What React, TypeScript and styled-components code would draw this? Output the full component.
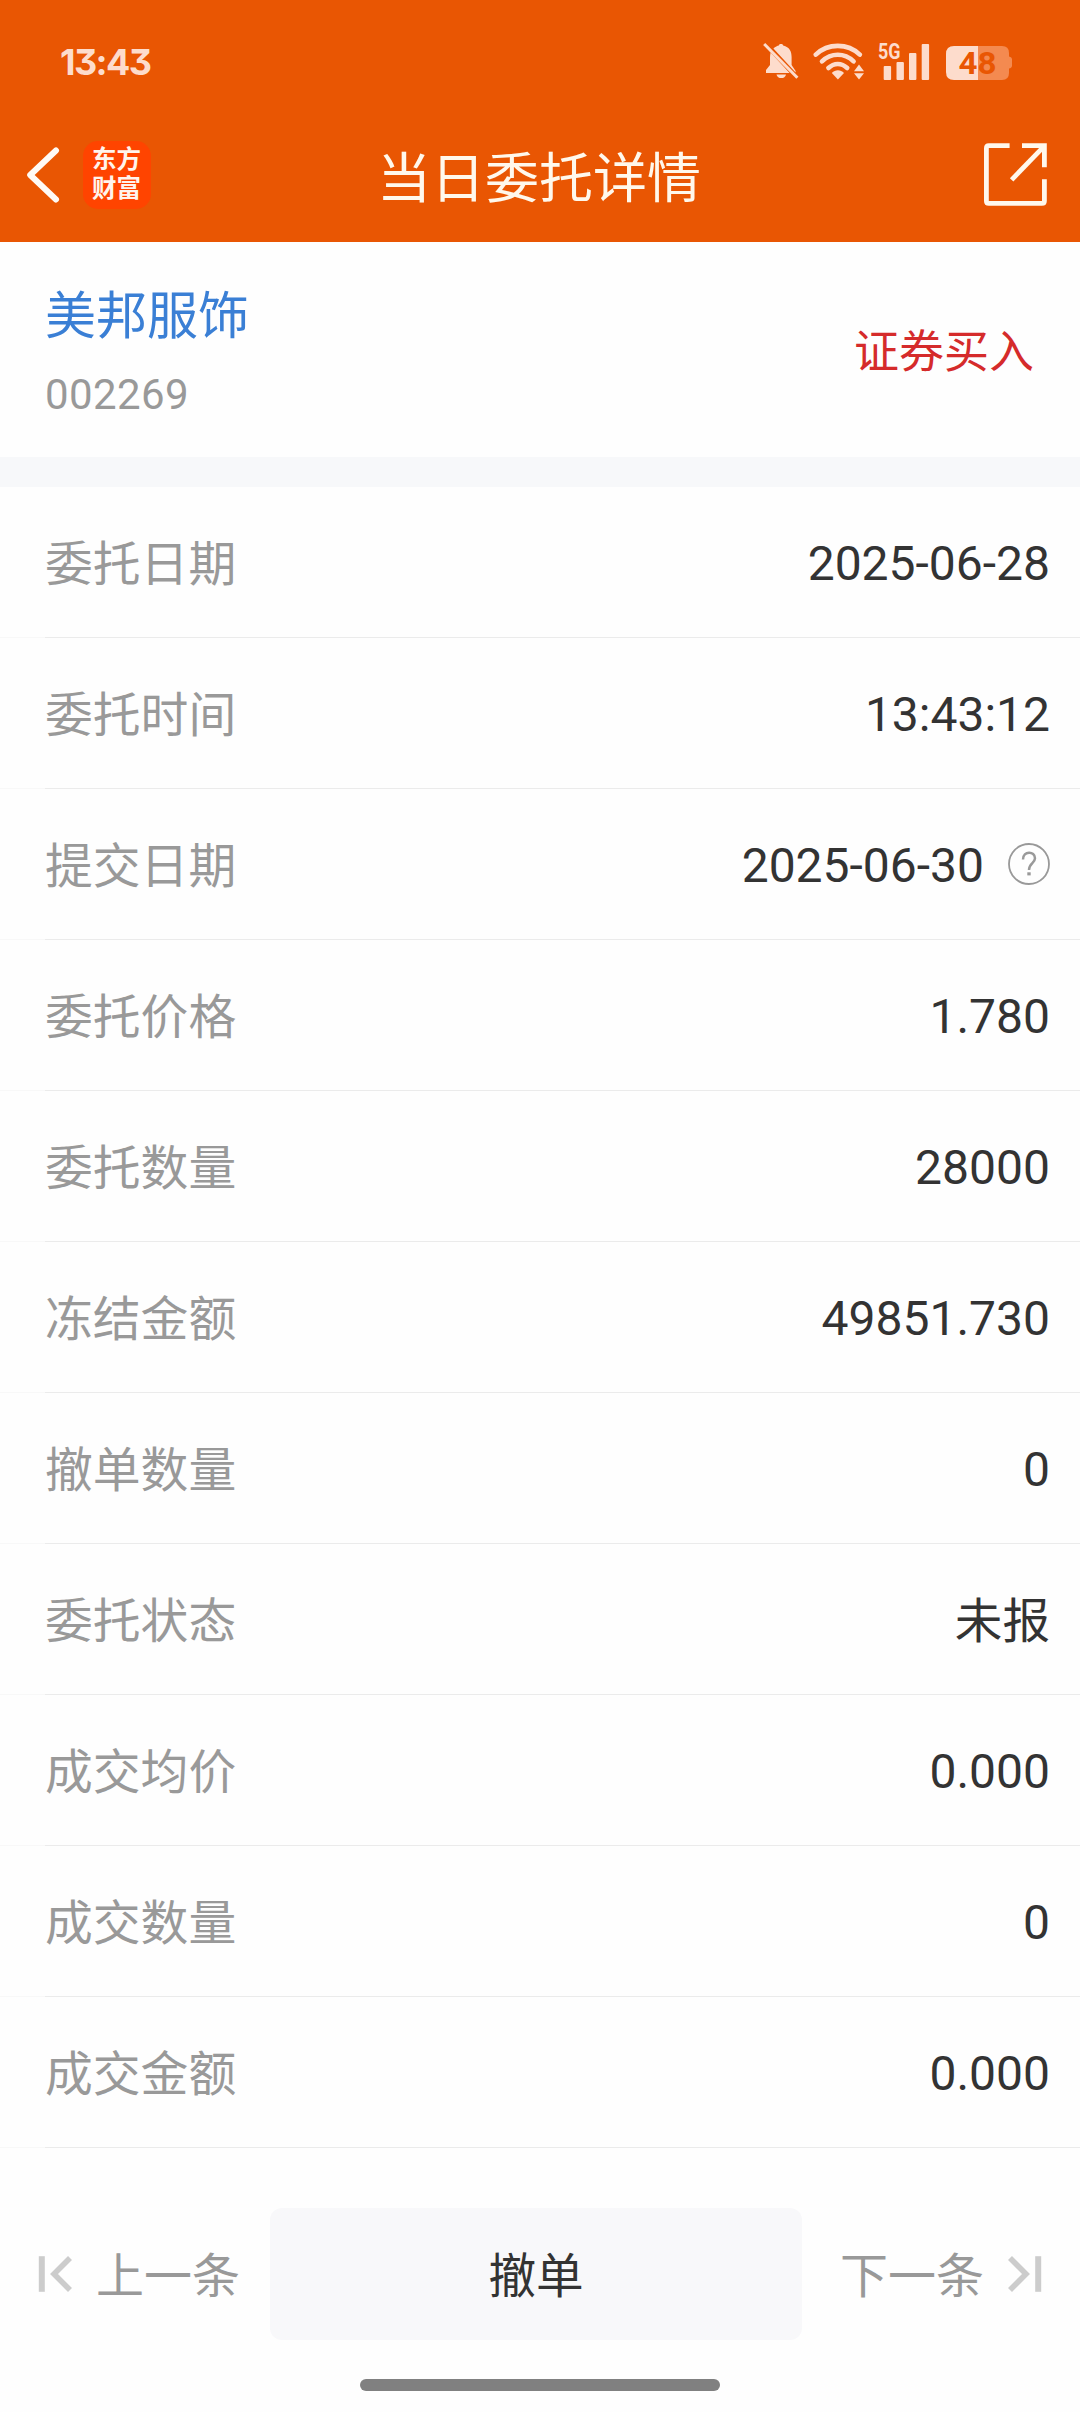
import React from 'react';
import styled, { createGlobalStyle } from 'styled-components';

const GlobalStyle = createGlobalStyle`
  *, *::before, *::after { box-sizing: border-box; }
  html, body { margin: 0; padding: 0; background: #fefefe; }
  body { font-family: Roboto, "Noto Sans CJK SC", sans-serif; color: #333333; }
  button { font: inherit; border: 0; padding: 0; margin: 0; background: none; }
  svg { display: block; flex: none; }
`;

const TINT = '#fddccc';
const ORANGE = '#e95603';

const Screen = styled.main`
  width: 1080px;
  height: 2412px;
  display: flex;
  flex-direction: column;
  background: #fefefe;
  overflow: hidden;
`;

const Header = styled.header`
  height: 242px;
  background: ${ORANGE};
  display: flex;
  flex-direction: column;
  flex: none;
`;

const StatusBar = styled.div`
  height: 107px;
  padding: 16px 67px 0 60px;
  display: flex;
  align-items: center;
  justify-content: space-between;
`;

const Clock = styled.span`
  font-family: Inter, sans-serif;
  font-feature-settings: 'cv09';
  font-weight: 700;
  font-size: 36px;
  letter-spacing: -1.6px;
  line-height: 40px;
  color: ${TINT};
`;

const StatusIcons = styled.div`
  display: flex;
  align-items: center;
  gap: 13px;
  padding-bottom: 2px;

  & > :first-child { margin-right: 1px; }
  & > :last-child { margin-left: 3px; }
`;

const NavBar = styled.div`
  height: 135px;
  padding: 0 32px 0 26px;
  display: grid;
  grid-template-columns: 1fr auto 1fr;
  align-items: center;
`;

const NavLeft = styled.div`
  display: flex;
  align-items: center;
  gap: 23px;
`;

const NavRight = styled.div`
  display: flex;
  justify-content: flex-end;
`;

const Logo = styled.div`
  width: 68px;
  height: 68px;
  border-radius: 15px;
  background: #ff4400;
  color: #fff4ec;
  display: flex;
  flex-direction: column;
  align-items: center;
  justify-content: center;
  font-weight: 700;
  font-size: 24.5px;
  line-height: 29px;
  padding: 0 1px 2px 0;
`;

const Title = styled.h1`
  margin: 0;
  padding: 10px 0 0 4px;
  font-size: 54px;
  line-height: 80px;
  font-weight: 400;
  color: #fff8ec;
`;

const Stock = styled.section`
  height: 215px;
  flex: none;
  padding: 6px 46px 0 45px;
  display: flex;
  align-items: center;
  justify-content: space-between;
`;

const StockInfo = styled.div`
  display: flex;
  flex-direction: column;
`;

const StockName = styled.div`
  font-size: 51px;
  line-height: 76px;
  color: #3a7fd5;
`;

const StockCode = styled.div`
  margin-top: 8px;
  font-size: 42px;
  line-height: 64px;
  letter-spacing: 0.4px;
  color: #999999;
`;

const Side = styled.div`
  font-size: 45px;
  line-height: 66px;
  color: #d52b2b;
`;

const Band = styled.div`
  height: 30px;
  flex: none;
  background: #f7f8fa;
`;

const Row = styled.div`
  height: 151px;
  flex: none;
  padding: 0 30px 1px 45px;
  display: flex;
  align-items: center;
  justify-content: space-between;
  background: linear-gradient(90deg, #f8f8f8 45px, #ebebeb 45px) bottom / 100% 1px no-repeat;
`;

const Label = styled.span`
  padding-top: 6px;
  font-size: 47.8px;
  line-height: 72px;
  color: #999999;
`;

const Value = styled.span<{ $cjk?: boolean }>`
  display: flex;
  align-items: center;
  gap: 24px;
  font-size: ${(p) => (p.$cjk ? '47.6px' : '48px')};
  line-height: 72px;
  padding-top: ${(p) => (p.$cjk ? '6px' : '0')};
  color: #333333;
`;

const Figure = styled.span`
  padding-top: 3px;
`;

const Footer = styled.footer`
  height: 132px;
  margin-top: 60px;
  flex: none;
  display: grid;
  grid-template-columns: 270px 532px 278px;
`;

const Pager = styled.button<{ $end?: boolean }>`
  display: flex;
  align-items: center;
  gap: 23px;
  justify-content: ${(p) => (p.$end ? 'flex-end' : 'flex-start')};
  padding: ${(p) => (p.$end ? '0 38px 0 0' : '0 0 0 38px')};
  font-size: 48px;
  line-height: 72px;
  color: #999999;
`;

const PagerText = styled.span`
  padding-top: 6px;
`;

const CancelButton = styled.button`
  padding-top: 6px;
  border-radius: 12px;
  background: #f8f8fa;
  color: #333333;
  font-size: 47.6px;
  line-height: 72px;
`;

const HomeBar = styled.div`
  width: 360px;
  height: 12px;
  margin: 39px auto 0;
  border-radius: 6px;
  background: #808080;
`;

const MutedBell = () => (
  <svg width="36" height="38" viewBox="0 0 36 38" fill={TINT}>
    <path d="M10.4 6.6C12.4 4.4 14.4 3.8 15.8 3.4C16.4 1.6 19.6 1.6 20.2 3.4C26.5 5 28.6 9 28.6 15V23L32.6 29V30.6Z" />
    <path d="M7.6 10.5L26.6 31H3V28L7 23V16C7 14 7.2 12.2 7.6 10.5Z" />
    <path d="M13.5 32.4H23C22.4 37.2 14.2 37.2 13.5 32.4Z" />
    <path d="M1.2 2L34.4 35.8" stroke={TINT} strokeWidth="3" />
  </svg>
);

const Wifi = () => (
  <svg width="52" height="38" viewBox="0 0 52 38">
    <g fill="none" stroke={TINT} strokeWidth="4.6" strokeLinecap="round">
      <path d="M2.8 12.6C15 1 34.6 1 46.8 12.6" />
      <path d="M9 19.4C18.2 10.6 31.4 10.6 40.6 19.4" />
      <path d="M15.4 26C21 20.6 28.6 20.6 34.2 26" />
    </g>
    <path d="M18.8 31C22.2 27.4 27.6 27.4 31 31L24.9 37.4Z" fill={TINT} />
    <path d="M46 22.4L51 29.2H41Z M46 37.4L51 31.2H41Z" fill={TINT} />
  </svg>
);

const Signal = () => (
  <svg width="52" height="54" viewBox="0 -8 52 54" fill={TINT}>
    <text x="0" y="16.6" fontFamily="Roboto, sans-serif" fontWeight="700" fontSize="22" textLength="22.5" lengthAdjust="spacingAndGlyphs">
      5G
    </text>
    <rect x="5.7" y="24" width="7.4" height="14" rx="1" />
    <rect x="18.5" y="20" width="7.4" height="18" rx="1" />
    <rect x="31" y="11" width="7.4" height="27" rx="1" />
    <rect x="43.7" y="2" width="7.4" height="36" rx="1" />
  </svg>
);

const Battery = () => (
  <svg width="67" height="38" viewBox="0 0 67 38">
    <path d="M32 4H56Q63 4 63 11V14.5Q66 15 66 17.5V23.5Q66 26 63 26.5V31Q63 38 56 38H32Z" fill="#f48a50" />
    <path d="M32 4H8Q0 4 0 12V30Q0 38 8 38H32Z" fill={TINT} />
    <text x="12.4" y="32.4" fontFamily="Roboto, sans-serif" fontWeight="700" fontSize="31.5" textLength="38" lengthAdjust="spacingAndGlyphs" fill={ORANGE}>
      48
    </text>
  </svg>
);

const BackIcon = () => (
  <svg width="34" height="58" viewBox="0 0 34 58" fill="none" stroke="#fffaf5" strokeWidth="6" strokeLinecap="round">
    <path d="M30 4.5L4.2 29L30 53.5" strokeLinejoin="round" />
  </svg>
);

const ShareIcon = () => (
  <svg width="64" height="64" viewBox="0 0 64 64" fill="none" stroke="#fff8ec" strokeWidth="4.8">
    <path d="M25.6 2.7H4.9Q2.4 2.7 2.4 5.2V57.9Q2.4 60.4 4.9 60.4H57.9Q60.4 60.4 60.4 57.9V36.3" />
    <path d="M38 2.7H60.4V24.3" />
    <path d="M60 3.3L27.6 36.8" />
  </svg>
);

const HelpIcon = () => (
  <svg width="42" height="42" viewBox="0 0 42 42" fill="none" stroke="#999999">
    <circle cx="21" cy="21" r="20" strokeWidth="1.8" />
    <path d="M15 16.4C15 7.6 27 7.6 27 15.3C27 20.2 21 20.3 21 27" strokeWidth="2.5" />
    <path d="M21 29.3V32.4" strokeWidth="3.4" />
  </svg>
);

const StepIcon = ({ flip }: { flip?: boolean }) => (
  <svg width="35" height="38" viewBox="0 0 35 38" fill="none" stroke="#cccccc">
    <g transform={flip ? 'translate(35 0) scale(-1 1)' : undefined}>
      <path d="M3.8 1.2V36.8" strokeWidth="6" />
      <path d="M32 3L16 19L32 35" strokeWidth="5.6" />
    </g>
  </svg>
);

const rows: { label: string; value: string; help?: boolean; cjk?: boolean }[] = [
  { label: '委托日期', value: '2025-06-28' },
  { label: '委托时间', value: '13:43:12' },
  { label: '提交日期', value: '2025-06-30', help: true },
  { label: '委托价格', value: '1.780' },
  { label: '委托数量', value: '28000' },
  { label: '冻结金额', value: '49851.730' },
  { label: '撤单数量', value: '0' },
  { label: '委托状态', value: '未报', cjk: true },
  { label: '成交均价', value: '0.000' },
  { label: '成交数量', value: '0' },
  { label: '成交金额', value: '0.000' },
];

export default function App() {
  return (
    <>
      <GlobalStyle />
      <Screen>
        <Header>
          <StatusBar>
            <Clock>13:43</Clock>
            <StatusIcons>
              <MutedBell />
              <Wifi />
              <Signal />
              <Battery />
            </StatusIcons>
          </StatusBar>
          <NavBar>
            <NavLeft>
              <BackIcon />
              <Logo>
                <span>东方</span>
                <span>财富</span>
              </Logo>
            </NavLeft>
            <Title>当日委托详情</Title>
            <NavRight>
              <ShareIcon />
            </NavRight>
          </NavBar>
        </Header>
        <Stock>
          <StockInfo>
            <StockName>美邦服饰</StockName>
            <StockCode>002269</StockCode>
          </StockInfo>
          <Side>证券买入</Side>
        </Stock>
        <Band />
        {rows.map((row) => (
          <Row key={row.label}>
            <Label>{row.label}</Label>
            <Value $cjk={row.cjk}>
              {row.cjk ? row.value : <Figure>{row.value}</Figure>}
              {row.help && <HelpIcon />}
            </Value>
          </Row>
        ))}
        <Footer>
          <Pager>
            <StepIcon />
            <PagerText>上一条</PagerText>
          </Pager>
          <CancelButton>撤单</CancelButton>
          <Pager $end>
            <PagerText>下一条</PagerText>
            <StepIcon flip />
          </Pager>
        </Footer>
        <HomeBar />
      </Screen>
    </>
  );
}
